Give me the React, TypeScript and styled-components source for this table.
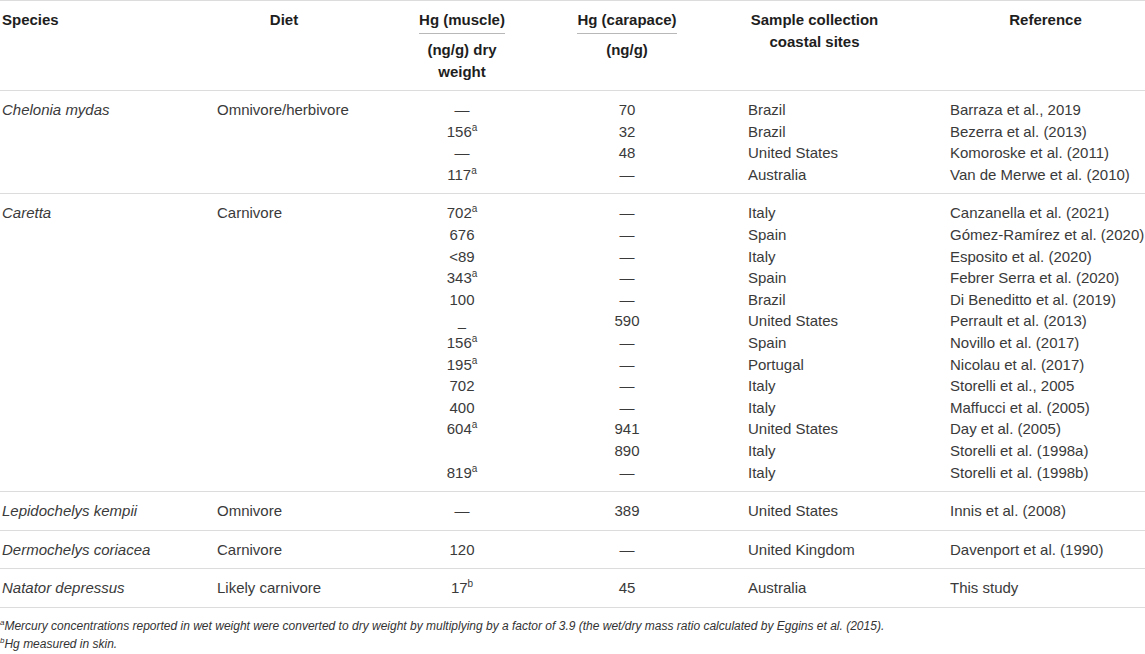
import React, { FC } from "react";
import styled, { createGlobalStyle } from "styled-components";

const GlobalStyle = createGlobalStyle`
  html, body {
    margin: 0;
    padding: 0;
    background: #fff;
  }
  body {
    font-family: "Liberation Sans", Arial, sans-serif;
    color: #3a3a3a;
  }
`;

const Page = styled.div`
  width: 1145px;
  font-size: 15px;
`;

const Row = styled.div`
  display: grid;
  grid-template-columns: 217px 134px 222px 108px 200px 1fr;
  line-height: 21.6px;

  & > :nth-child(1) {
    padding-left: 2px;
  }
  & > :nth-child(5) {
    padding-left: 67px;
  }
  & > :nth-child(6) {
    padding-left: 69px;
    padding-right: 4px;
  }
`;

const HeadRow = styled(Row)`
  border-top: 1px solid #dcdcdc;
  border-bottom: 1px solid #dcdcdc;
  padding: 8px 0 7px;
  align-items: start;
  line-height: 22px;
`;

const HeadCell = styled.div<{ $align?: "left" | "center" }>`
  font-weight: bold;
  color: #1e1e1e;
  text-align: ${(p) => p.$align ?? "center"};
`;

const Unit = styled.span`
  display: inline-block;
  border-bottom: 1px solid #b8b8b8;
  padding-bottom: 2px;
  margin-bottom: 5px;
`;

const Group = styled.div`
  border-bottom: 1px solid #dcdcdc;
  padding: 8px 0;
`;

const Cell = styled.div<{ $align?: "left" | "center"; $italic?: boolean }>`
  text-align: ${(p) => p.$align ?? "left"};
  font-style: ${(p) => (p.$italic ? "italic" : "normal")};
  white-space: nowrap;
`;

const Sup = styled.sup`
  font-size: 10px;
  line-height: 0;
  vertical-align: 6px;
`;

const NoteSup = styled(Sup)`
  font-size: 8px;
  vertical-align: 5px;
`;

const LowDash = styled.span`
  line-height: 0;
  vertical-align: -6px;
`;

const Notes = styled.div`
  padding-top: 9px;
`;

const Note = styled.p`
  margin: 0;
  font-size: 12px;
  line-height: 18px;
  font-style: italic;
  color: #333;
`;

type Entry = [string, string, string, string];

interface Species {
  name: string;
  diet: string;
  rows: Entry[];
}

const data: Species[] = [
  {
    name: "Chelonia mydas",
    diet: "Omnivore/herbivore",
    rows: [
      ["—", "70", "Brazil", "Barraza et al., 2019"],
      ["156^a", "32", "Brazil", "Bezerra et al. (2013)"],
      ["—", "48", "United States", "Komoroske et al. (2011)"],
      ["117^a", "—", "Australia", "Van de Merwe et al. (2010)"],
    ],
  },
  {
    name: "Caretta",
    diet: "Carnivore",
    rows: [
      ["702^a", "—", "Italy", "Canzanella et al. (2021)"],
      ["676", "—", "Spain", "Gómez-Ramírez et al. (2020)"],
      ["<89", "—", "Italy", "Esposito et al. (2020)"],
      ["343^a", "—", "Spain", "Febrer Serra et al. (2020)"],
      ["100", "—", "Brazil", "Di Beneditto et al. (2019)"],
      ["_", "590", "United States", "Perrault et al. (2013)"],
      ["156^a", "—", "Spain", "Novillo et al. (2017)"],
      ["195^a", "—", "Portugal", "Nicolau et al. (2017)"],
      ["702", "—", "Italy", "Storelli et al., 2005"],
      ["400", "—", "Italy", "Maffucci et al. (2005)"],
      ["604^a", "941", "United States", "Day et al. (2005)"],
      ["", "890", "Italy", "Storelli et al. (1998a)"],
      ["819^a", "—", "Italy", "Storelli et al. (1998b)"],
    ],
  },
  {
    name: "Lepidochelys kempii",
    diet: "Omnivore",
    rows: [["—", "389", "United States", "Innis et al. (2008)"]],
  },
  {
    name: "Dermochelys coriacea",
    diet: "Carnivore",
    rows: [["120", "—", "United Kingdom", "Davenport et al. (1990)"]],
  },
  {
    name: "Natator depressus",
    diet: "Likely carnivore",
    rows: [["17^b", "45", "Australia", "This study"]],
  },
];

// "156^a" -> 156 with a superscript a; "_" is the low dash of the source table
const Value: FC<{ text: string }> = ({ text }) => {
  if (text === "_") return <LowDash>–</LowDash>;
  const [num, mark] = text.split("^");
  return (
    <>
      {num}
      {mark && <Sup>{mark}</Sup>}
    </>
  );
};

const App: FC = () => {
  return (
    <Page>
      <GlobalStyle />
      <HeadRow>
        <HeadCell $align="left">Species</HeadCell>
        <HeadCell>Diet</HeadCell>
        <HeadCell>
          <Unit>Hg (muscle)</Unit>
          <div>(ng/g) dry</div>
          <div>weight</div>
        </HeadCell>
        <HeadCell>
          <Unit>Hg (carapace)</Unit>
          <div>(ng/g)</div>
        </HeadCell>
        <HeadCell>
          Sample collection
          <br />
          coastal sites
        </HeadCell>
        <HeadCell>Reference</HeadCell>
      </HeadRow>

      {data.map((sp) => (
        <Group key={sp.name}>
          {sp.rows.map((r, i) => (
            <Row key={i}>
              <Cell $italic>{i === 0 ? sp.name : ""}</Cell>
              <Cell>{i === 0 ? sp.diet : ""}</Cell>
              <Cell $align="center">
                <Value text={r[0]} />
              </Cell>
              <Cell $align="center">{r[1]}</Cell>
              <Cell>{r[2]}</Cell>
              <Cell>{r[3]}</Cell>
            </Row>
          ))}
        </Group>
      ))}

      <Notes>
        <Note>
          <NoteSup>a</NoteSup>Mercury concentrations reported in wet weight were converted
          to dry weight by multiplying by a factor of 3.9 (the wet/dry mass ratio calculated
          by Eggins et al. (2015).
        </Note>
        <Note>
          <NoteSup>b</NoteSup>Hg measured in skin.
        </Note>
      </Notes>
    </Page>
  );
};

export default App;
